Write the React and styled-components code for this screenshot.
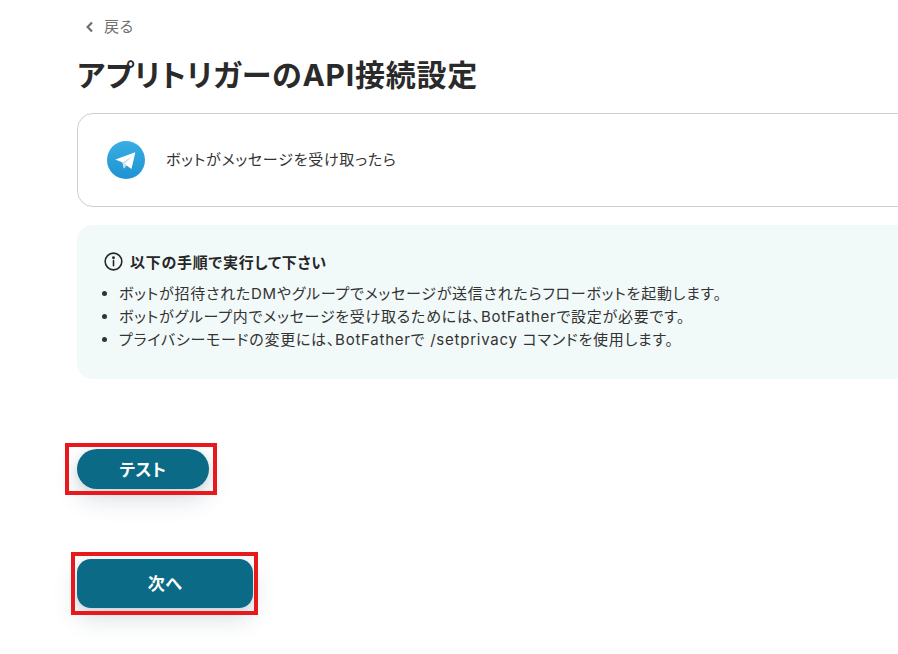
import React from "react";
import styled, { createGlobalStyle } from "styled-components";

const Global = createGlobalStyle`
  html, body { margin: 0; padding: 0; background: #fff; overflow: hidden; }
  body { font-family: Inter, "Noto Sans CJK JP", sans-serif; color: #2b2b2b; font-feature-settings: "palt"; letter-spacing: 0.75px; }
`;

const Page = styled.main`
  width: 898px;
  height: 654px;
  overflow: hidden;
  padding: 16px 0 0 77px;
  box-sizing: border-box;
`;

const Content = styled.div`
  width: 1000px;
  display: flex;
  flex-direction: column;
`;

const BackLink = styled.a`
  display: flex;
  align-items: center;
  gap: 7px;
  height: 22px;
  margin-left: 6px;
  font-size: 15px;
  line-height: 20px;
  color: #6f6f6f;
  svg { display: block; }
`;

const Title = styled.h1`
  margin: 15px 0 0;
  height: 45px;
  line-height: 44px;
  font-size: 30px;
  font-weight: 700;
  color: #2a2a2a;
`;

const TriggerCard = styled.section`
  margin-top: 15px;
  height: 94px;
  box-sizing: border-box;
  border: 1px solid #cfcfcf;
  border-radius: 16px;
  display: flex;
  align-items: center;
  gap: 21px;
  padding: 0 0 4px 29px;
  font-size: 15px;
  color: #333;
  svg { margin-top: 4px; }
`;

const Notice = styled.section`
  margin-top: 18px;
  height: 154px;
  box-sizing: border-box;
  background: #f2f9f9;
  border-radius: 16px;
  padding: 24px 0 0 27px;
`;

const NoticeHead = styled.div`
  display: flex;
  align-items: center;
  gap: 7px;
  height: 24px;
  font-size: 15px;
  font-weight: 700;
  color: #262626;
  svg { display: block; }
`;

const Steps = styled.ul`
  margin: 9px 0 0;
  padding: 0 0 0 15px;
  font-size: 15px;
  line-height: 23px;
  color: #333;
`;

const Actions = styled.div`
  display: flex;
  flex-direction: column;
  align-items: flex-start;
`;

const ActionButton = styled.button`
  position: relative;
  display: block;
  width: ${(p) => p.$width}px;
  height: ${(p) => p.$height}px;
  margin-top: ${(p) => p.$top}px;
  border: 0;
  padding: 0 0 2px;
  border-radius: ${(p) => p.$radius}px;
  background: #0b6a85;
  color: #fff;
  font-family: inherit;
  font-feature-settings: inherit;
  letter-spacing: 0.4px;
  font-size: 17px;
  font-weight: 700;
  box-shadow: 0 10px 24px rgba(40, 70, 90, 0.18), 0 2px 8px rgba(40, 70, 90, 0.12);
`;

const Highlight = styled.span`
  position: absolute;
  left: ${(p) => -p.$x}px;
  right: ${(p) => -p.$r}px;
  top: ${(p) => -p.$y}px;
  bottom: ${(p) => -p.$b}px;
  border: 4px solid #e8191c;
  pointer-events: none;
`;

const TelegramIcon = () => (
  <svg width="38" height="38" viewBox="0 0 38 38" aria-hidden="true">
    <defs>
      <linearGradient id="tg" x1="0" y1="0" x2="0" y2="1">
        <stop offset="0" stopColor="#39aee2" />
        <stop offset="1" stopColor="#1f93d3" />
      </linearGradient>
    </defs>
    <circle cx="19" cy="19" r="19" fill="url(#tg)" />
    <path d="M8.3 18.6 28.3 11.3 24.5 28 19.5 24.5 17 27.5 15.5 21.5Z" fill="#fff" />
    <path d="M15.5 21.5 17 27.5 18 22.8 25.5 15Z" fill="#d3e4f1" />
    <path d="M18 22.8 17 27.5 19.5 24.5Z" fill="#b5cfe4" />
  </svg>
);

const InfoIcon = () => (
  <svg width="19" height="19" viewBox="0 0 18 18" fill="none" stroke="#262626" strokeWidth="1.5" aria-hidden="true">
    <circle cx="9" cy="9" r="7.9" />
    <path d="M9 8.2V13" strokeLinecap="round" />
    <circle cx="9" cy="5.4" r="0.6" fill="#262626" />
  </svg>
);

const ChevronIcon = () => (
  <svg width="14" height="14" viewBox="0 0 14 14" fill="none" stroke="#6f6f6f" strokeWidth="2.2" aria-hidden="true">
    <path d="M9 2.5 4.6 7 9 11.5" />
  </svg>
);

export default function App() {
  return (
    <>
      <Global />
      <Page>
        <Content>
          <BackLink><ChevronIcon />戻る</BackLink>
          <Title>アプリトリガーのAPI接続設定</Title>
          <TriggerCard>
            <TelegramIcon />
            <span>ボットがメッセージを受け取ったら</span>
          </TriggerCard>
          <Notice>
            <NoticeHead><InfoIcon />以下の手順で実行して下さい</NoticeHead>
            <Steps>
              <li>ボットが招待されたDMやグループでメッセージが送信されたらフローボットを起動します。</li>
              <li>ボットがグループ内でメッセージを受け取るためには、BotFatherで設定が必要です。</li>
              <li>プライバシーモードの変更には、BotFatherで /setprivacy コマンドを使用します。</li>
            </Steps>
          </Notice>
          <Actions>
            <ActionButton $width={132} $height={40} $radius={20} $top={70}>
              テスト
              <Highlight $x={12} $r={8} $y={6} $b={6} />
            </ActionButton>
            <ActionButton $width={176} $height={49} $radius={14} $top={70}>
              次へ
              <Highlight $x={6} $r={5} $y={7} $b={7} />
            </ActionButton>
          </Actions>
        </Content>
      </Page>
    </>
  );
}
